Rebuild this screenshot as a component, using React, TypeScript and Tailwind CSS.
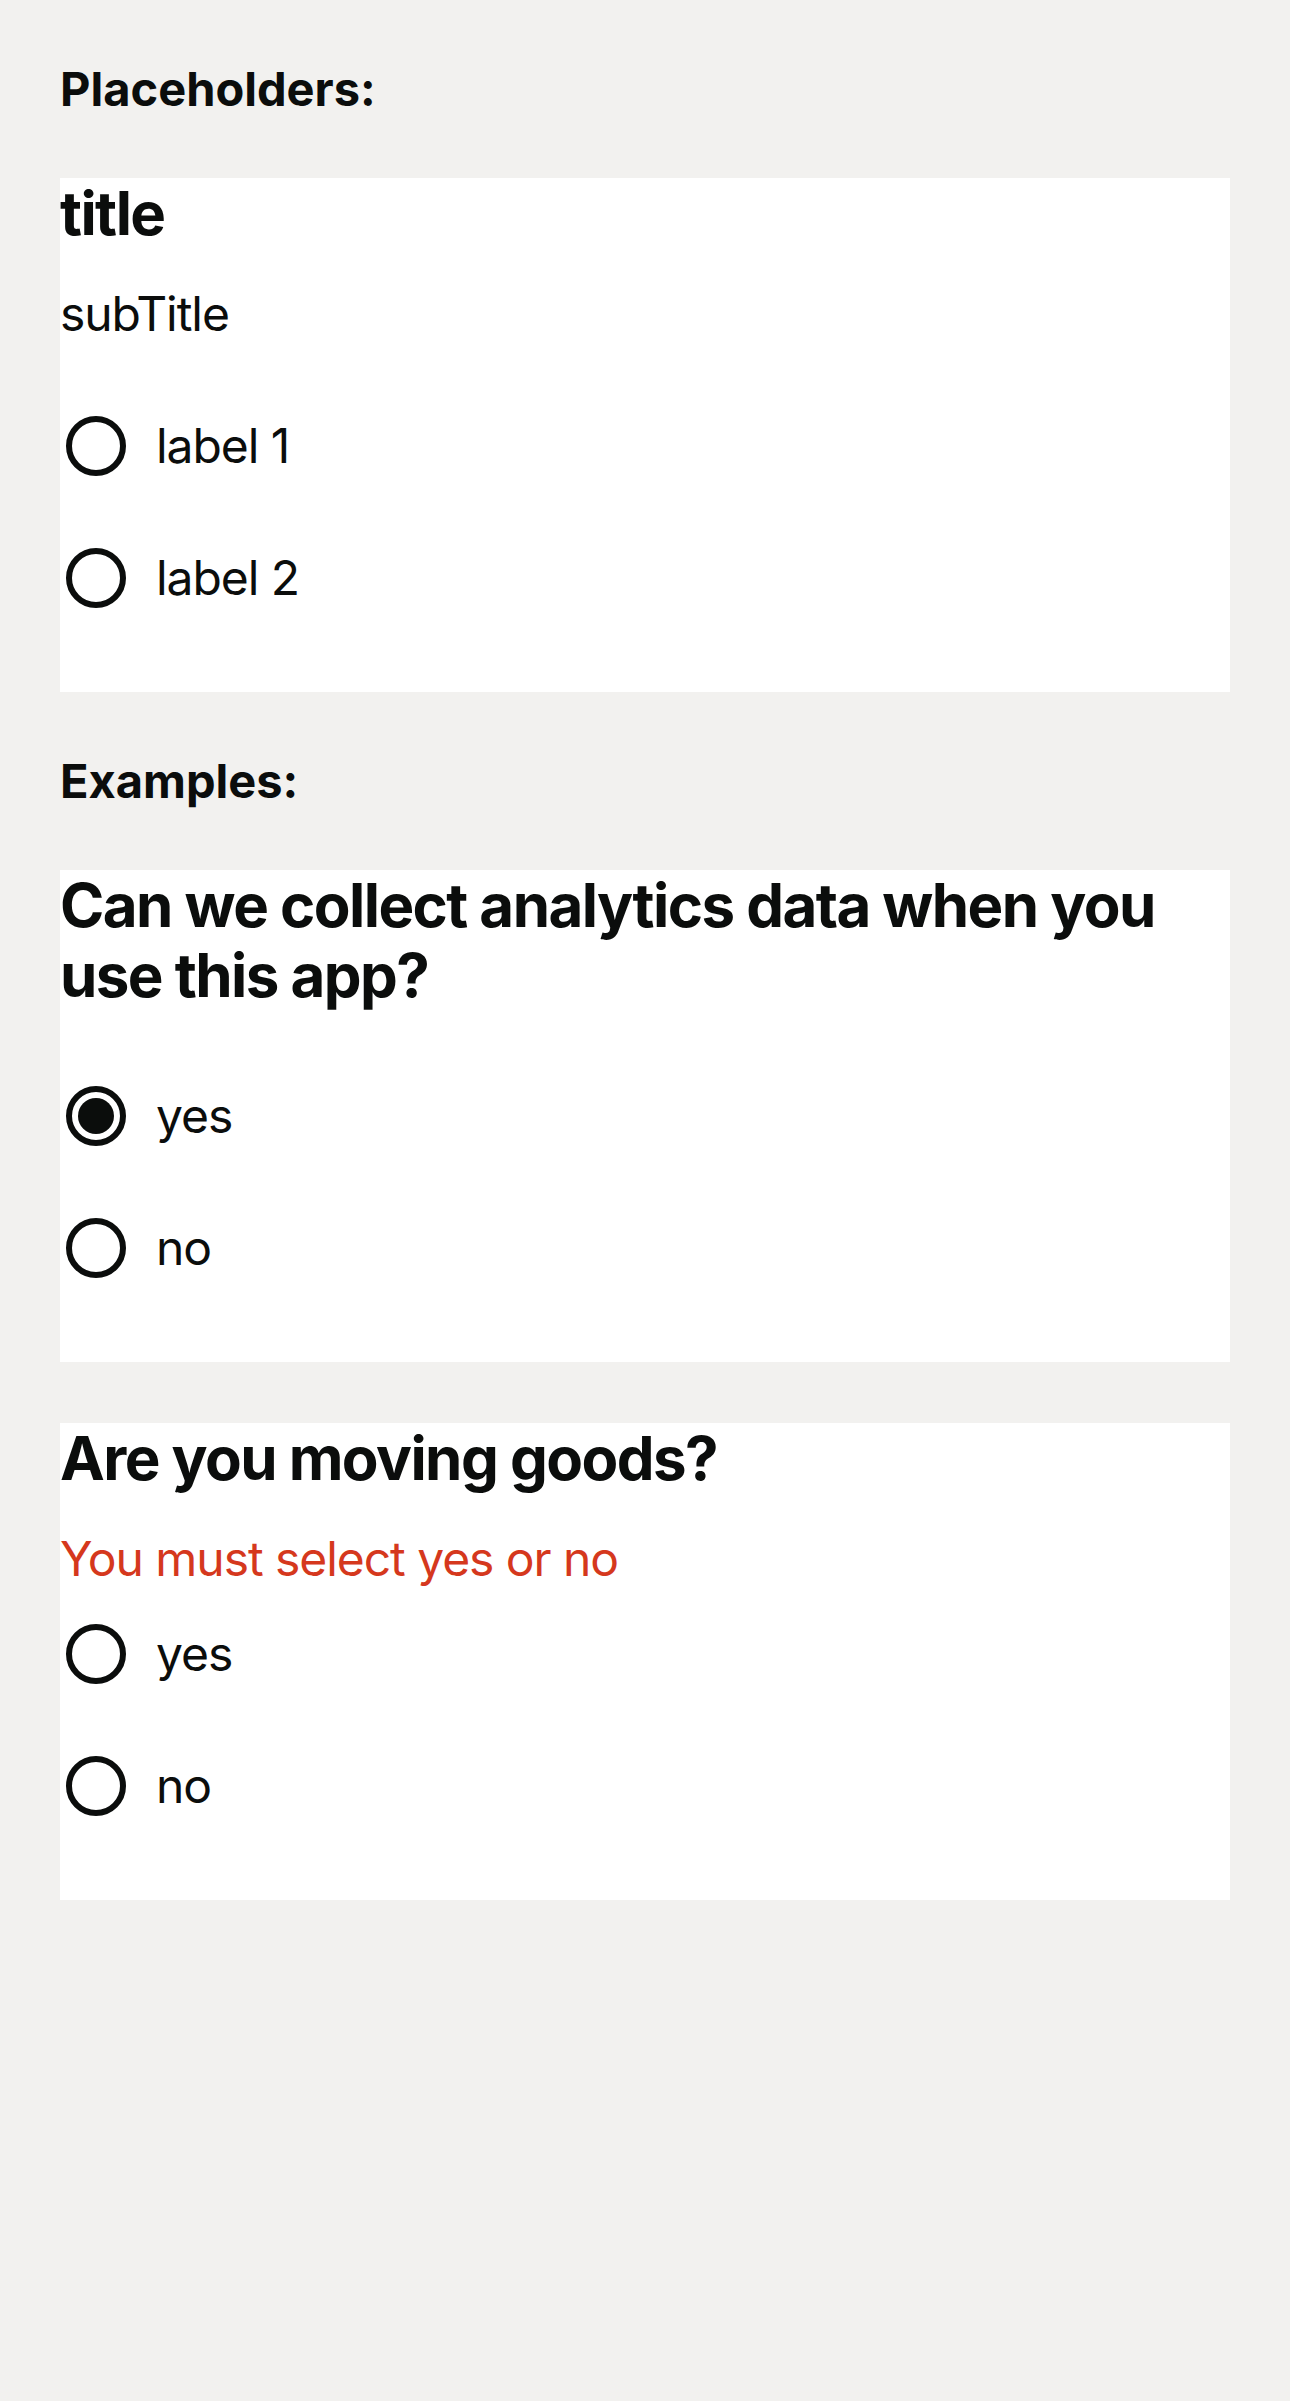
interface RadioOption {
  label: string;
  checked?: boolean;
}

interface RadioCardProps {
  title: string;
  subTitle?: string;
  error?: string;
  options: RadioOption[];
}

function RadioDot({ checked }: { checked?: boolean }) {
  return (
    <div className="ml-[6px] flex h-[60px] w-[60px] shrink-0 items-center justify-center rounded-full border-[6px] border-[#0b0d0c]">
      {checked && <div className="h-[36px] w-[36px] rounded-full bg-[#0b0d0c]"></div>}
    </div>
  );
}

function RadioCard({ title, subTitle, error, options }: RadioCardProps) {
  return (
    <div className="w-full bg-white pb-[48px]">
      <h3 className="text-[60px] font-bold leading-[70px] tracking-[-0.026em] text-[#0b0d0c]">{title}</h3>
      {subTitle && (
        <p className="mt-[37px] mb-[37px] text-[48px] leading-[58px] tracking-[-0.022em] text-[#0b0d0c]">
          {subTitle}
        </p>
      )}
      {error && (
        <p className="mt-[37px] text-[48px] leading-[58px] tracking-[-0.022em] text-[#d5381d]">{error}</p>
      )}
      {!subTitle && !error && <div className="h-[40px]"></div>}
      <div className="flex flex-col">
        {options.map((opt) => (
          <div key={opt.label} className="flex h-[132px] items-center">
            <RadioDot checked={opt.checked} />
            <span className="ml-[30px] text-[48px] leading-[58px] tracking-[-0.022em] text-[#0b0d0c]">
              {opt.label}
            </span>
          </div>
        ))}
      </div>
    </div>
  );
}

function SectionLabel({ children }: { children: React.ReactNode }) {
  return <h2 className="text-[47px] font-bold leading-[56px] text-[#0b0d0c]">{children}</h2>;
}

export default function App() {
  return (
    <div className="min-h-screen bg-[#f2f1ef] px-[60px] pt-[61px] font-['Inter','Liberation_Sans',sans-serif]">
      <div className="flex flex-col gap-[61px]">
        <SectionLabel>Placeholders:</SectionLabel>
        <RadioCard
          title="title"
          subTitle="subTitle"
          options={[{ label: "label 1" }, { label: "label 2" }]}
        />
        <SectionLabel>Examples:</SectionLabel>
        <RadioCard
          title="Can we collect analytics data when you use this app?"
          options={[{ label: "yes", checked: true }, { label: "no" }]}
        />
        <RadioCard
          title="Are you moving goods?"
          error="You must select yes or no"
          options={[{ label: "yes" }, { label: "no" }]}
        />
      </div>
    </div>
  );
}
